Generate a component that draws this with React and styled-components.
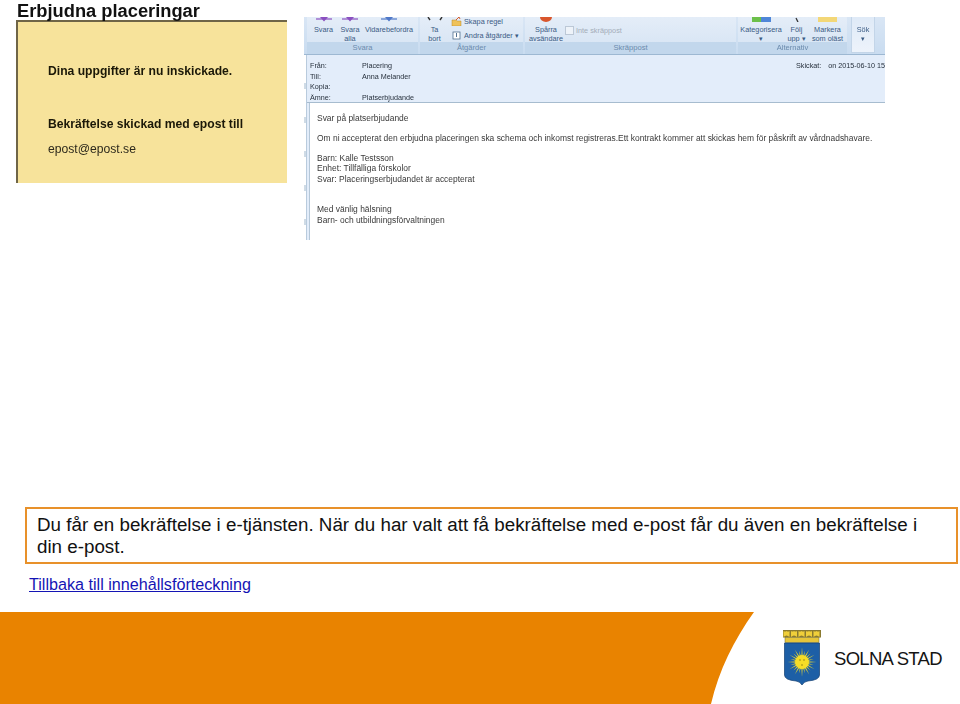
import React from 'react';
import styled, { createGlobalStyle } from 'styled-components';

const Global = createGlobalStyle`
  html, body { margin: 0; background: #fff; }
  body { font-family: 'Liberation Sans', Arial, sans-serif; }
`;

const Page = styled.div`
  width: 960px;
  height: 704px;
  overflow: hidden;
  display: flex;
  flex-direction: column;
`;

const Top = styled.div`
  display: flex;
  gap: 17px;
  height: 240px;
  padding-left: 16px;
`;

const Offer = styled.div`
  width: 271px;
  filter: blur(0.25px);
`;

const OfferTitle = styled.h1`
  margin: 0;
  padding-left: 1px;
  height: 20px;
  font-size: 18.3px;
  line-height: 21px;
  font-weight: bold;
  color: #111;
`;

const OfferBox = styled.div`
  height: 163px;
  padding: 42px 0 0 30px;
  box-sizing: border-box;
  background: #f7e39b;
  border-top: 2px solid #6f6547;
  border-left: 2px solid #6f6547;
`;

const OfferLine = styled.p`
  margin: 0 0 ${(p) => p.$gap || 0}px;
  font-size: 12.15px;
  line-height: 14px;
  font-weight: ${(p) => (p.$plain ? 'normal' : 'bold')};
  color: ${(p) => (p.$plain ? '#2e2a1c' : '#1b1808')};
`;

const Mail = styled.div`
  margin-top: 17px;
  width: 581px;
  height: 223px;
  overflow: hidden;
  display: flex;
  flex-direction: column;
  filter: blur(0.3px);
`;

const Ribbon = styled.div`
  height: 38px;
  flex: none;
  display: flex;
  gap: 2px;
  padding-left: 3px;
  box-sizing: border-box;
  background: linear-gradient(#d9e6f5, #c9dcf0);
  border-bottom: 1px solid #9db8d2;
`;

const Group = styled.div`
  width: ${(p) => p.$w}px;
  flex: none;
  display: flex;
  flex-direction: column;
  background: linear-gradient(#e4edf8, #d5e3f3);
`;

const GroupBody = styled.div`
  flex: 1;
  display: flex;
  overflow: hidden;
`;

const GroupTitle = styled.div`
  height: 12px;
  line-height: 12px;
  background: #c2d7ec;
  color: #6b8bad;
  font-size: 7.6px;
  text-align: center;
`;

const RibbonButton = styled.div`
  width: ${(p) => p.$w}px;
  flex: none;
  display: flex;
  flex-direction: column;
  align-items: center;
  color: #3a5b84;
  font-size: 7.3px;
  line-height: 9px;
  text-align: center;
  white-space: pre-line;
`;

const IconSlot = styled.svg`
  display: block;
  flex: none;
  margin-bottom: 3px;
`;

const SmallActions = styled.div`
  display: flex;
  flex-direction: column;
  gap: 5px;
  padding-left: 2px;
`;

const SmallAction = styled.div`
  display: flex;
  align-items: center;
  gap: 2px;
  height: 9px;
  font-size: 7.3px;
  line-height: 9px;
  color: #3a5b84;
  white-space: nowrap;
`;

const ActionIcon = styled.svg`
  width: 11px;
  height: 9px;
  flex: none;
`;

const Disabled = styled.div`
  display: flex;
  align-items: center;
  gap: 2px;
  height: 9px;
  margin: 9px 0 0 -2px;
  font-size: 7.3px;
  color: #a4adb8;
  white-space: nowrap;
`;

const CheckBox = styled.span`
  width: 7px;
  height: 7px;
  border: 1px solid #bcc8d6;
  background: #eef3f9;
`;

const SearchButton = styled.div`
  width: 24px;
  flex: none;
  margin-left: 2px;
  height: 36px;
  background: linear-gradient(#dfeaf7, #edf3fb);
  border: 1px solid #c3d5e8;
  border-top: none;
  box-sizing: border-box;
  padding-top: 8px;
  color: #3a5b84;
  font-size: 7.3px;
  line-height: 9px;
  text-align: center;
  white-space: pre-line;
`;

const Content = styled.div`
  flex: 1;
  display: flex;
`;

const Rail = styled.div`
  width: 2px;
  flex: none;
  background: repeating-linear-gradient(#fff 0 28px, #cfdbe6 28px 34px);
`;

const MailMain = styled.div`
  flex: 1;
  min-width: 0;
  display: flex;
  flex-direction: column;
  background: #e3edfa;
  border-left: 1px solid #b9cbdd;
`;

const Header = styled.div`
  height: 48px;
  flex: none;
  box-sizing: border-box;
  padding: 5px 0 0 3px;
  border-bottom: 1px solid #a7bccf;
  position: relative;
`;

const HeaderRow = styled.div`
  display: grid;
  grid-template-columns: 52px 1fr;
  height: 10.7px;
  font-size: 7.2px;
  line-height: 11px;
  color: #26303c;
`;

const Sent = styled.div`
  position: absolute;
  top: 5px;
  right: 0;
  display: flex;
  gap: 7px;
  font-size: 7.2px;
  line-height: 11px;
  color: #26303c;
  white-space: nowrap;
`;

const Body = styled.div`
  flex: 1;
  margin-left: 2px;
  background: #fff;
  border-left: 1px solid #b5c7d8;
  padding: 10px 0 0 7px;
  font-size: 8.45px;
  line-height: 10.4px;
  color: #3a3a3a;
  white-space: nowrap;
`;

const BodyLine = styled.div`
  margin-bottom: ${(p) => p.$gap || 0}px;
`;

const Callout = styled.div`
  margin: 267px 2px 0 25px;
  height: 57px;
  box-sizing: border-box;
  border: 2px solid #e8912a;
  padding: 5px 20px 0 10px;
  font-size: 18.8px;
  line-height: 22px;
  color: #111;
`;

const BackLink = styled.a`
  margin: 10px 0 0 29px;
  font-size: 16.15px;
  line-height: 20px;
  color: #1414b4;
  text-decoration: underline;
`;

const Footer = styled.footer`
  margin-top: 18px;
  height: 92px;
  flex: none;
  display: flex;
`;

const Band = styled.div`
  width: 754px;
  flex: none;
  background: #e98300;
  clip-path: path('M0 0 H754 C734 28 719 58 711 92 H0 Z');
`;

const Brand = styled.div`
  display: flex;
  align-items: flex-start;
  gap: 12px;
  padding: 18px 0 0 28px;
`;

const BrandName = styled.span`
  margin-top: 17px;
  font-size: 18.5px;
  line-height: 24px;
  letter-spacing: -0.7px;
  color: #151515;
  white-space: nowrap;
`;

const Reply = ({ w, color }) => (
  <IconSlot width={w} height="5" viewBox={`0 0 ${w} 5`}>
    <path d={`M0 2 H${w}`} fill="none" stroke={color} strokeWidth="1.2" />
    <path d={`M${w / 2 - 4} 0 H${w / 2 + 4} L${w / 2} 4.5 Z`} fill={color} />
  </IconSlot>
);

function Shield() {
  const rays = Array.from({ length: 24 }, (_, i) => (i * 360) / 24);
  const lobes = [0, 1, 2, 3, 4];
  return (
    <svg width="40" height="55" viewBox="0 0 40 55">
      <rect x="1" y="0" width="38" height="7.5" fill="#8a7a30" />
      <g fill="#f0cf3a">
        {lobes.map((i) => (
          <path key={i} d={`M${1.5 + i * 7.5} 7 V1 q1.5 1 3 0 q1.5 1 3 0 V7 q-3 -3 -6 0 Z`} />
        ))}
      </g>
      <rect x="3" y="7.5" width="34" height="5" fill="#e6c53a" stroke="#6f6a2a" strokeWidth="0.5" />
      <path d="M2.5 13 H37.5 V45 Q37.5 50 26 51 Q22 51.5 20 55 Q18 51.5 14 51 Q2.5 50 2.5 45 Z" fill="#1d5fa6" stroke="#123f73" strokeWidth="0.7" />
      <g fill="#f6dd26">
        {rays.map((a, i) => (
          <path key={a} d={`M19 32 L20 ${i % 2 ? 20 : 17.5} L21 32 Z`} transform={`rotate(${a} 20 32)`} />
        ))}
        <circle cx="20" cy="32" r="7" />
      </g>
      <path d="M17 30 h2 M21 30 h2 M19 35 h2" stroke="#8a7a10" strokeWidth="0.8" />
    </svg>
  );
}

function App() {
  return (
    <Page>
      <Global />
      <Top>
        <Offer>
          <OfferTitle>Erbjudna placeringar</OfferTitle>
          <OfferBox>
            <OfferLine $gap={39}>Dina uppgifter är nu inskickade.</OfferLine>
            <OfferLine $gap={11}>Bekräftelse skickad med epost till</OfferLine>
            <OfferLine $plain>epost@epost.se</OfferLine>
          </OfferBox>
        </Offer>
        <Mail>
          <Ribbon>
            <Group $w={111}>
              <GroupBody>
                <RibbonButton $w={33}><Reply w={16} color="#8a4fc0" />Svara</RibbonButton>
                <RibbonButton $w={20}><Reply w={16} color="#8a4fc0" />{'Svara\nalla'}</RibbonButton>
                <RibbonButton $w={58}><Reply w={16} color="#4f78c8" />Vidarebefordra</RibbonButton>
              </GroupBody>
              <GroupTitle>Svara</GroupTitle>
            </Group>
            <Group $w={103}>
              <GroupBody>
                <RibbonButton $w={29}>
                  <IconSlot width="16" height="5" viewBox="0 0 16 5">
                    <path d="M1 0 L3 3 M15 0 L13 3" stroke="#333" strokeWidth="1.4" />
                  </IconSlot>
                  {'Ta\nbort'}
                </RibbonButton>
                <SmallActions>
                  <SmallAction>
                    <ActionIcon viewBox="0 0 11 9">
                      <path d="M1 3 h4 l1 1 h4 v5 h-9 z" fill="#efc25a" stroke="#b98a2a" strokeWidth="0.5" />
                      <path d="M5 3 L8 0 L9 2" fill="none" stroke="#d65c2a" />
                    </ActionIcon>
                    Skapa regel
                  </SmallAction>
                  <SmallAction>
                    <ActionIcon viewBox="0 0 11 9">
                      <rect x="2" y="1" width="7" height="7" fill="#fff" stroke="#52708f" strokeWidth="0.8" />
                      <path d="M5.5 2 v4" stroke="#52708f" />
                    </ActionIcon>
                    Andra åtgärder ▾
                  </SmallAction>
                </SmallActions>
              </GroupBody>
              <GroupTitle>Åtgärder</GroupTitle>
            </Group>
            <Group $w={211}>
              <GroupBody>
                <RibbonButton $w={42}>
                  <IconSlot width="14" height="5" viewBox="0 0 14 5">
                    <path d="M1 0 A6 5 0 0 0 13 0 Z" fill="#d9562c" />
                  </IconSlot>
                  {'Spårra\navsändare'}
                </RibbonButton>
                <Disabled><CheckBox />Inte skräppost</Disabled>
              </GroupBody>
              <GroupTitle>Skräppost</GroupTitle>
            </Group>
            <Group $w={109}>
              <GroupBody>
                <RibbonButton $w={46}>
                  <IconSlot width="19" height="5" viewBox="0 0 19 5">
                    <rect width="9" height="5" fill="#6cc04a" />
                    <rect x="9" width="10" height="5" fill="#4f86d8" />
                  </IconSlot>
                  {'Kategorisera\n▾'}
                </RibbonButton>
                <RibbonButton $w={25}>
                  <IconSlot width="8" height="5" viewBox="0 0 8 5">
                    <path d="M3 1 L5 5" stroke="#333" strokeWidth="1.3" />
                  </IconSlot>
                  {'Följ\nupp ▾'}
                </RibbonButton>
                <RibbonButton $w={37}>
                  <IconSlot width="19" height="5" viewBox="0 0 19 5">
                    <path d="M0 0 h19 v5 h-19 z" fill="#f3d777" />
                  </IconSlot>
                  {'Markera\nsom oläst'}
                </RibbonButton>
              </GroupBody>
              <GroupTitle>Alternativ</GroupTitle>
            </Group>
            <SearchButton>{'Sök\n▾'}</SearchButton>
          </Ribbon>
          <Content>
            <Rail />
            <MailMain>
              <Header>
                <HeaderRow><span>Från:</span><span>Placering</span></HeaderRow>
                <HeaderRow><span>Till:</span><span>Anna Melander</span></HeaderRow>
                <HeaderRow><span>Kopia:</span><span /></HeaderRow>
                <HeaderRow><span>Ämne:</span><span>Platserbjudande</span></HeaderRow>
                <Sent><span>Skickat:</span><span>on 2015-06-10 15</span></Sent>
              </Header>
              <Body>
                <BodyLine $gap={9.6}>Svar på platserbjudande</BodyLine>
                <BodyLine $gap={9.6}>Om ni accepterat den erbjudna placeringen ska schema och inkomst registreras.Ett kontrakt kommer att skickas hem för påskrift av vårdnadshavare.</BodyLine>
                <BodyLine>Barn: Kalle Testsson</BodyLine>
                <BodyLine>Enhet: Tillfälliga förskolor</BodyLine>
                <BodyLine $gap={20}>Svar: Placeringserbjudandet är accepterat</BodyLine>
                <BodyLine>Med vänlig hälsning</BodyLine>
                <BodyLine>Barn- och utbildningsförvaltningen</BodyLine>
              </Body>
            </MailMain>
          </Content>
        </Mail>
      </Top>
      <Callout>Du får en bekräftelse i e-tjänsten. När du har valt att få bekräftelse med e-post får du även en bekräftelse i din e-post.</Callout>
      <BackLink href="#">Tillbaka till innehållsförteckning</BackLink>
      <Footer>
        <Band />
        <Brand>
          <Shield />
          <BrandName>SOLNA STAD</BrandName>
        </Brand>
      </Footer>
    </Page>
  );
}

export default App;
